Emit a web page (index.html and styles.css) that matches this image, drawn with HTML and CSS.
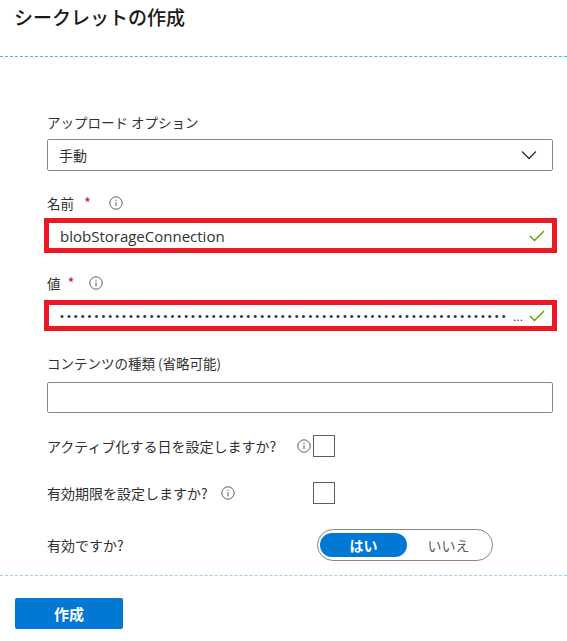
FILE: index.html
```html
<!DOCTYPE html>
<html lang="ja">
<head>
<meta charset="utf-8">
<title>シークレットの作成</title>
<link rel="stylesheet" href="styles.css">
</head>
<body>
<header class="header">
  <h1 class="title">シークレットの作成</h1>
</header>
<main class="form">
  <div class="label label-first">アップロード オプション</div>
  <div class="select">
    <span class="select-text">手動</span>
    <svg class="chevron" width="16" height="10" viewBox="0 0 16 10"><path d="M1 1.5 L8 8.5 L15 1.5" fill="none" stroke="#323130" stroke-width="1.3"/></svg>
  </div>

  <div class="label label-gap">名前 <span class="req">*</span>
    <svg class="info" width="14" height="14" viewBox="0 0 14 14"><circle cx="7" cy="7" r="6.2" fill="none" stroke="#605e5c" stroke-width="1"/><rect x="6.5" y="6" width="1" height="4.2" fill="#605e5c"/><rect x="6.5" y="3.8" width="1" height="1.1" fill="#605e5c"/></svg>
  </div>
  <div class="input red red-name">
    <span class="value-text">blobStorageConnection</span>
    <svg class="check" width="16" height="12" viewBox="0 0 16 12"><path d="M1 6 L5.5 10.5 L15 1" fill="none" stroke="#57a300" stroke-width="1.4"/></svg>
  </div>

  <div class="label label-gap2">値 <span class="req req-tight">*</span>
    <svg class="info" width="14" height="14" viewBox="0 0 14 14"><circle cx="7" cy="7" r="6.2" fill="none" stroke="#605e5c" stroke-width="1"/><rect x="6.5" y="6" width="1" height="4.2" fill="#605e5c"/><rect x="6.5" y="3.8" width="1" height="1.1" fill="#605e5c"/></svg>
  </div>
  <div class="input red red-value">
    <span class="dots">•••••••••••••••••••••••••••••••••••••••••••••••••••••••••••••••••</span>
    <span class="ellipsis">...</span>
    <svg class="check" width="16" height="12" viewBox="0 0 16 12"><path d="M1 6 L5.5 10.5 L15 1" fill="none" stroke="#57a300" stroke-width="1.4"/></svg>
  </div>

  <div class="label label-gap">コンテンツの種類 (省略可能)</div>
  <div class="input plain"></div>

  <div class="row row-first">
    <div class="row-label">アクティブ化する日を設定しますか?
      <svg class="info info-end" width="14" height="14" viewBox="0 0 14 14"><circle cx="7" cy="7" r="6.2" fill="none" stroke="#605e5c" stroke-width="1"/><rect x="6.5" y="6" width="1" height="4.2" fill="#605e5c"/><rect x="6.5" y="3.8" width="1" height="1.1" fill="#605e5c"/></svg>
    </div>
    <div class="checkbox"></div>
  </div>
  <div class="row row-next">
    <div class="row-label">有効期限を設定しますか?
      <svg class="info" width="14" height="14" viewBox="0 0 14 14"><circle cx="7" cy="7" r="6.2" fill="none" stroke="#605e5c" stroke-width="1"/><rect x="6.5" y="6" width="1" height="4.2" fill="#605e5c"/><rect x="6.5" y="3.8" width="1" height="1.1" fill="#605e5c"/></svg>
    </div>
    <div class="checkbox"></div>
  </div>
  <div class="row row-toggle">
    <div class="row-label">有効ですか?</div>
    <div class="toggle">
      <span class="toggle-on">はい</span>
      <span class="toggle-off">いいえ</span>
    </div>
  </div>
</main>
<footer class="footer">
  <button class="create">作成</button>
</footer>
</body>
</html>
```
FILE: styles.css
```css
* { box-sizing: border-box; }
body {
  margin: 0;
  background: #fff;
  color: #323130;
  font-family: "Noto Sans CJK JP", "Noto Sans", sans-serif;
  font-size: 14px;
}
.header {
  height: 57px;
  border-bottom: 1px dashed #2ac4ef;
  padding: 3px 0 0 14px;
}
.title {
  margin: 0;
  font-size: 19px;
  font-weight: 500;
  line-height: 28px;
  color: #1b1a19;
}
.form {
  padding: 55px 14px 0 47px;
  display: flex;
  flex-direction: column;
}
.label {
  height: 20px;
  line-height: 20px;
  font-size: 13.5px;
  display: flex;
  align-items: center;
  gap: 4px;
}
.label-gap { margin-top: 22px; }
.label-gap2 { margin-top: 20px; }
.req { color: #c4262e; font-size: 15px; margin-left: 6px; margin-right: 14px; }
.req-tight { margin-left: 3px; margin-right: 10px; }
.info { flex: none; }
.select {
  margin-top: 7px;
  height: 32px;
  border: 1px solid #8a8886;
  border-radius: 2px;
  display: flex;
  align-items: center;
  justify-content: space-between;
  padding: 0 15px 0 11px;
}
.select-text { font-size: 14px; }
.input {
  display: flex;
  align-items: center;
  justify-content: space-between;
}
.red {
  border: 5px solid #e81b23;
  margin-left: -3px;
  margin-right: -4px;
  padding: 0 7px 0 11px;
}
.red-name { margin-top: 5px; height: 35px; }
.red-value { margin-top: 7px; height: 31px; }
.value-text {
  font-family: "Open Sans", "Noto Sans", sans-serif;
  font-size: 15px;
  color: #323130;
}
.dots {
  flex: 1;
  min-width: 0;
  overflow: hidden;
  white-space: nowrap;
  font-family: "Liberation Sans", sans-serif;
  font-size: 11px;
  letter-spacing: 3.05px;
  color: #323130;
}
.ellipsis {
  flex: none;
  font-family: "Liberation Sans", sans-serif;
  font-size: 12px;
  color: #323130;
  margin: 2px 6px 0 -2px;
}
.check { flex: none; }
.plain {
  margin-top: 9px;
  height: 31px;
  border: 1px solid #8a8886;
  border-radius: 2px;
}
.row {
  display: grid;
  grid-template-columns: 266px auto;
  align-items: center;
}
.row-label {
  font-size: 14px;
  display: flex;
  align-items: center;
  gap: 13px;
}
.info-end { margin-left: auto; margin-right: 2px; }
.row-first { margin-top: 22px; }
.row-next { margin-top: 25px; }
.row-toggle { margin-top: 25px; }
.checkbox {
  width: 22px;
  height: 22px;
  border: 1px solid #605e5c;
  background: #fff;
}
.toggle {
  margin-left: 4px;
  width: 176px;
  height: 32px;
  border: 1px solid #8a8886;
  border-radius: 16px;
  padding: 3px 2px;
  display: flex;
  align-items: center;
}
.toggle-on {
  width: 87px;
  height: 24px;
  border-radius: 12px;
  background: #0078d4;
  color: #fff;
  font-weight: 700;
  font-size: 14px;
  display: flex;
  align-items: center;
  justify-content: center;
}
.toggle-off {
  flex: 1;
  text-align: center;
  font-size: 14px;
  color: #605e5c;
}
.footer {
  margin-top: 14px;
  border-top: 1px dashed #9fcfe0;
  padding: 22px 0 0 15px;
}
.create {
  width: 108px;
  height: 31px;
  border: none;
  border-radius: 2px;
  background: #0078d4;
  color: #fff;
  font-family: "Noto Sans CJK JP", sans-serif;
  font-size: 15px;
  font-weight: 700;
  padding: 0;
}
```
